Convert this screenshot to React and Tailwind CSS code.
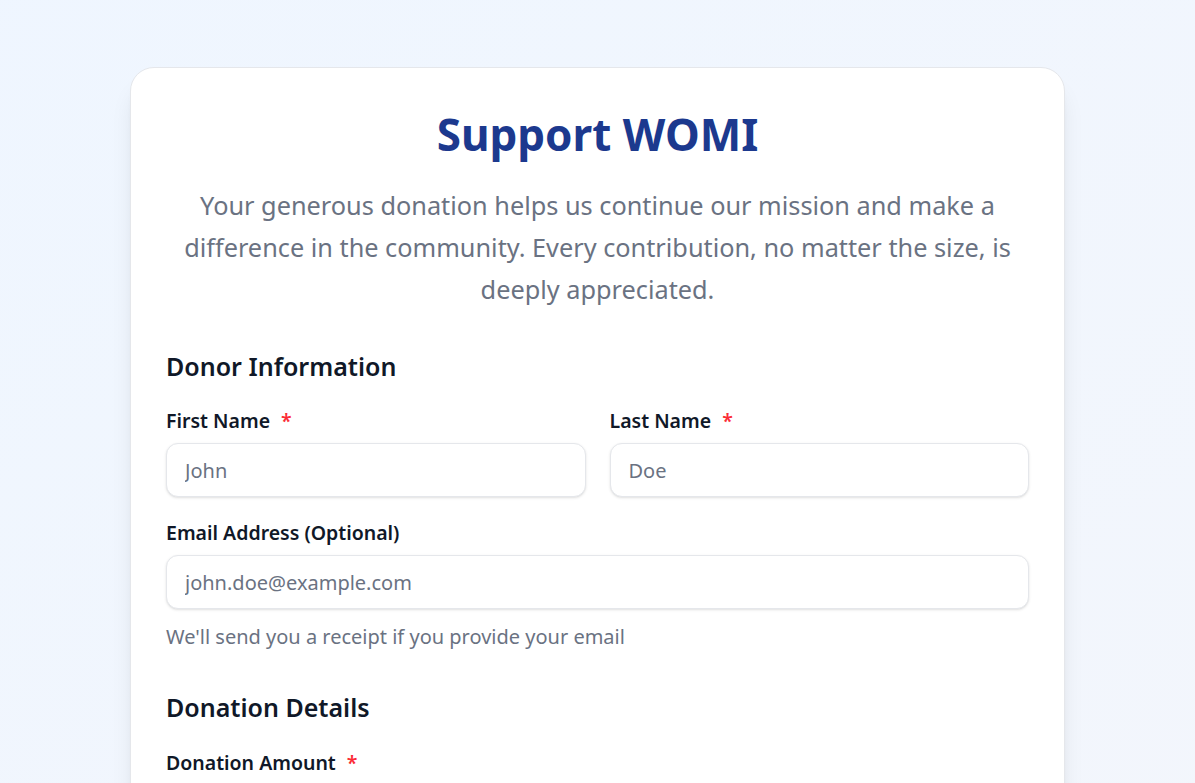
import React from 'react';

function Label({ children, required }) {
  return (
    <label className="block text-[19.5px] font-semibold text-gray-900 mb-[9px] leading-[26px]">
      {children}
      {required && <span className="text-red-500 ml-[11px]">*</span>}
    </label>
  );
}

function Input({ placeholder, type = 'text' }) {
  return (
    <input
      type={type}
      placeholder={placeholder}
      className="w-full h-[54px] px-[18px] rounded-xl border border-gray-200 bg-white shadow-sm text-[20px] text-gray-900 placeholder:text-gray-500 focus:outline-none"
    />
  );
}

export default function App() {
  return (
    <div
      className="min-h-screen bg-gradient-to-br from-blue-50 to-[#f3f6fc] pt-[67px] pb-12"
      style={{ fontFamily: '"Noto Sans", "Open Sans", sans-serif' }}
    >
      <div className="w-[935px] mx-auto bg-white rounded-3xl border border-gray-200 shadow-xl px-[35px] pt-[36px] pb-10">
        <h1 className="text-[44px] font-bold text-blue-900 text-center leading-[60px]">Support WOMI</h1>
        <p className="mt-[20px] text-[25.3px] leading-[42px] text-gray-500 text-center px-2">
          Your generous donation helps us continue our mission and make a difference in the community.
          Every contribution, no matter the size, is deeply appreciated.
        </p>

        <section className="mt-[39px]">
          <h2 className="text-[25px] font-semibold text-gray-900 leading-[34px] mb-[25px]">Donor Information</h2>
          <div className="grid grid-cols-2 gap-6">
            <div>
              <Label required>First Name</Label>
              <Input placeholder="John" />
            </div>
            <div>
              <Label required>Last Name</Label>
              <Input placeholder="Doe" />
            </div>
          </div>
          <div className="mt-[23px]">
            <Label>Email Address (Optional)</Label>
            <Input type="email" placeholder="john.doe@example.com" />
            <p className="mt-[14px] text-[20px] text-gray-500 leading-[28px]">
              We'll send you a receipt if you provide your email
            </p>
          </div>
        </section>

        <section className="mt-[39px]">
          <h2 className="text-[25px] font-semibold text-gray-900 leading-[34px] mb-[26px]">Donation Details</h2>
          <Label required>Donation Amount</Label>
          <div className="grid grid-cols-4 gap-4 mt-3">
            {['$25', '$50', '$100', '$250'].map((a) => (
              <button key={a} className="h-[54px] rounded-xl border border-gray-200 text-[20px] font-semibold text-gray-700">
                {a}
              </button>
            ))}
          </div>
        </section>
      </div>
    </div>
  );
}
